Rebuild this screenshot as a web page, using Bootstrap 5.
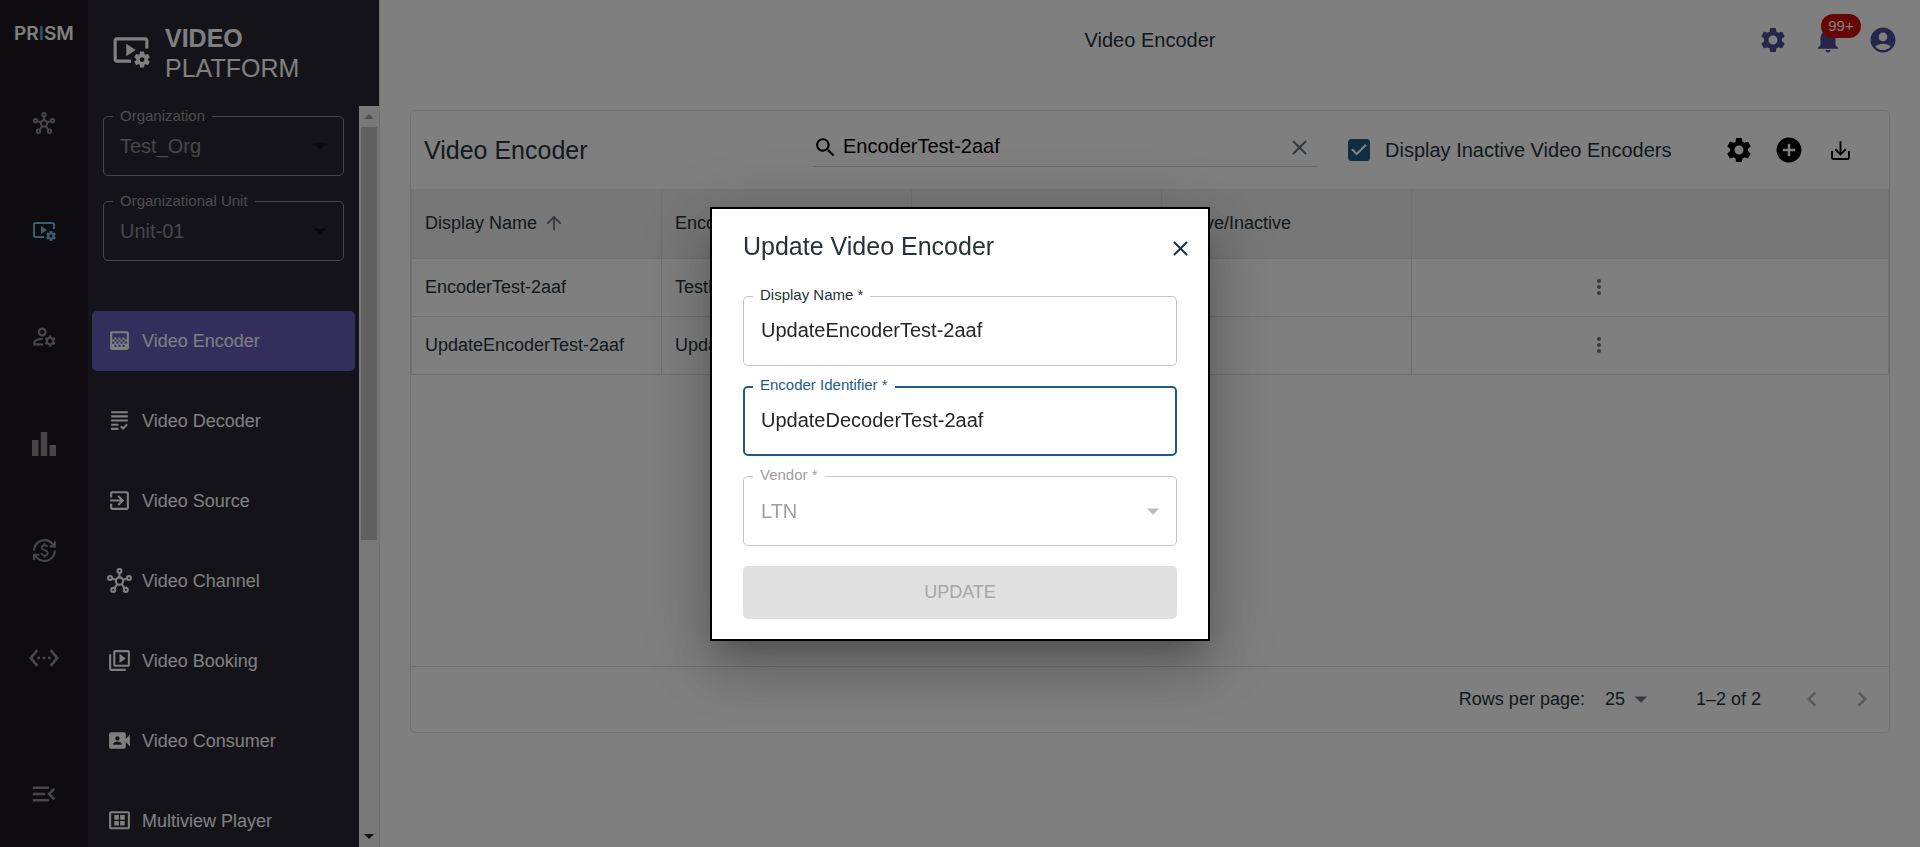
<!DOCTYPE html>
<html lang="en">
<head>
<meta charset="utf-8">
<meta name="viewport" content="width=device-width, initial-scale=1">
<title>Video Encoder</title>
<link href="https://cdn.jsdelivr.net/npm/bootstrap@5.3.0/dist/css/bootstrap.min.css" rel="stylesheet">
<style>
  :root { --ink:#263238; --line:#e0e0e0; --rail:#1e1922; --panel:#2a2735; --accent:#645eb8; --brand:#504a94; --blue:#1f5c82; }
  body { font-family:"Liberation Sans",Arial,sans-serif; font-size:18px; line-height:24px; color:var(--ink); background:#fff; }
  svg { fill:currentColor; flex:none; display:block; }
  .i22{width:22px;height:22px} .i24{width:24px;height:24px} .i25{width:25px;height:25px} .i27{width:27px;height:27px}
  .i30{width:30px;height:30px} .i32{width:32px;height:32px} .i38{width:38px;height:38px}
  .plain { background:none; border:0; padding:0; color:inherit; }

  .rail { width:88px; background:var(--rail); color:#8e8e8e; flex:none; }
  .rail-logo { height:69px; font:600 19px/24px Inter,sans-serif; color:#fff; padding-top:22px; }
  .rail-logo span { color:#5aa9cc; }
  .rail-link { height:107px; color:inherit; }
  .rail-link.current { color:#6fbfe3; }

  .side { width:292px; background:var(--panel); color:#fff; flex:none; border-right:1px solid var(--line); }
  .side-head { height:106px; padding:23px 24px 0; font-size:25px; line-height:30px; gap:15px; }
  .side-body { padding:10px 4px 0; }
  .side-fields { padding:0 11px; gap:25px; margin-bottom:50px; }
  .side-nav { gap:20px; }
  .side-nav a { height:60px; padding:0 15px; gap:10px; color:#fff; border-radius:5px; flex:none; }
  .side-nav a.current { background:var(--accent); }
  .bar-track { width:20px; background:#f1f1f1; color:#a3a3a3; flex:none; }
  .bar-track .cap { height:21px; flex:none; }
  .bar-track .thumb { height:413px; margin:0 2px; background:#c1c1c1; }

  .outlined { position:relative; }
  .outlined > label { position:absolute; left:10px; top:-10px; padding:0 7px; font-size:15px; line-height:18px; background:#fff; z-index:1; }
  .outlined .form-control, .outlined .form-select { height:70px; padding:0 17px; font-size:20px; line-height:24px; border:1px solid #c4c4c4; border-radius:5px; background-color:#fff; color:#262626; box-shadow:none; }
  .outlined .form-select { background-size:30px 30px; background-position:right 8px center; background-image:url("data:image/svg+xml,%3Csvg xmlns='http://www.w3.org/2000/svg' viewBox='0 0 24 24'%3E%3Cpath fill='%23bdbdbd' d='M7 10l5 5 5-5z'/%3E%3C/svg%3E"); }
  .outlined .form-select:disabled { color:#9e9e9e; opacity:1; }
  .outlined.active > label { color:var(--blue); }
  .outlined.active .form-control { border:2px solid var(--blue); padding:0 16px; }
  .outlined.muted > label { color:#9e9e9e; }
  .side .outlined > label { background:var(--panel); color:#9a9a9a; top:-9px; }
  .side .outlined .form-select { height:60px; padding:0 16px; background-color:transparent; border-color:#8e8e8e; color:#8e8e8e; background-image:url("data:image/svg+xml,%3Csvg xmlns='http://www.w3.org/2000/svg' viewBox='0 0 24 24'%3E%3Cpath fill='%23111' d='M7 10l5 5 5-5z'/%3E%3C/svg%3E"); }

  .topbar { height:80px; display:grid; grid-template-columns:1fr auto 1fr; align-items:center; padding:0 22px; }
  .topbar h1 { font-size:20px; line-height:24px; font-weight:400; margin:0; }
  .topbar .tools { color:var(--brand); gap:25px; }
  .count { position:absolute; left:8px; top:-11px; width:40px; height:24px; border-radius:12px; background:#cc0e0e; color:#fff; font-size:15px; line-height:24px; text-align:center; }

  .panel { margin:30px 30px 0; border:1px solid var(--line); border-radius:5px; height:623px; }
  .toolbar { height:78px; padding:0 32px 0 13px; }
  .toolbar h2 { font-size:25px; line-height:30px; font-weight:400; margin:0; width:389px; }
  .search { height:38px; border-bottom:1px solid #cfcfcf; width:505px; padding:0 6px 0 0; color:#000; margin-bottom:5px; }
  .search input { border:0; padding:0 0 2px 1px; font-size:20px; line-height:24px; color:#000; background:none; box-shadow:none; }
  .inactive { margin-left:30px; gap:15px; font-size:20px; }
  .inactive .form-check-input { width:22px; height:22px; margin:0; border-radius:3px; border-color:var(--blue); background-color:var(--blue); }
  .inactive .form-check-input:checked { background-image:url("data:image/svg+xml,%3Csvg xmlns='http://www.w3.org/2000/svg' viewBox='3 3 18 18'%3E%3Cpath fill='%23fff' d='M10 17l-5-5 1.410-1.410L10 14.170l7.590-7.590L19 8l-9 9z'/%3E%3C/svg%3E"); }
  .actions { gap:20px; color:#000; }
  .grid-table { table-layout:fixed; margin:0; --bs-table-color:var(--ink); }
  .grid-table th, .grid-table td { font-weight:400; padding:0 13px; border:1px solid var(--line); border-top:0; vertical-align:middle; height:58px; white-space:nowrap; color:var(--ink); }
  .grid-table th { height:69px; background:#efefef; }
  .grid-table .sorted { gap:6px; }
  .grid-table .c-main { width:250px; } .grid-table .c-act { width:375px; }
  .grid-table .open-end { border-right:0; } .grid-table .fill-end { border-left:0; }
  .pager { height:66px; border-top:1px solid var(--line); padding:0 12px 2px; }
  .pager select { border:0; background:none; appearance:none; padding:0; margin-left:20px; color:var(--ink); }
  .pager .span-of { margin:0 36px 0 40px; }
  .pager .step { color:#b4b4b4; }
  .pager .step + .step { margin-left:20px; }

  .modal-dialog { max-width:500px; }
  .modal-content { border:2px solid #000; border-radius:0; color:var(--ink); padding:20px 31px 20px; box-shadow:0 14px 24px -9px rgba(0,0,0,.2),0 30px 48px 4px rgba(0,0,0,.14),0 14px 72px 12px rgba(0,0,0,.14); }
  .modal-title { font-size:25px; line-height:34px; font-weight:400; }
  .modal-head { height:67px; margin-right:-16px; }
  .modal-head button { margin-top:7px; }
  .modal-content form { gap:20px; }
  .btn-save, .btn-save:disabled { height:53px; border:0; border-radius:5px; background:#e0e0e0; color:#a6a6a6; font-size:18px; opacity:1; }
</style>
<script src="https://cdn.jsdelivr.net/npm/bootstrap@5.3.0/dist/js/bootstrap.bundle.min.js"></script>
</head>
<body class="vh-100 d-flex overflow-hidden">

<svg class="d-none">
  <symbol id="hub" viewBox="0 0 24 24"><g fill="none" stroke="currentColor" stroke-width="2"><circle cx="12" cy="12.500" r="3.500"/><circle cx="12" cy="2.900" r="1.900"/><circle cx="2.900" cy="9.500" r="1.900"/><circle cx="21.100" cy="9.500" r="1.900"/><circle cx="6" cy="21" r="1.900"/><circle cx="18" cy="21" r="1.900"/><path d="M12 5v4M4.800 10.100l3.800 1.200M19.200 10.100l-3.800 1.200M7.200 19.300l2.600-3.700M16.800 19.300l-2.600-3.700"/></g></symbol>
  <symbol id="video-settings" viewBox="0 0 24 24"><path d="M3 6h18v5h2V6c0-1.100-.9-2-2-2H3c-1.100 0-2 .9-2 2v12c0 1.100.9 2 2 2h9v-2H3V6z"/><path d="M15 12 9 8v8z"/><path d="M22.710 18.430c.03-.29.04-.58.01-.86l1.070-.85c.1-.08.12-.21.06-.32l-1.030-1.790c-.06-.11-.19-.15-.31-.11l-1.280.5c-.23-.17-.48-.31-.75-.42l-.2-1.360c-.02-.13-.12-.22-.25-.22h-2.070c-.12 0-.23.09-.25.21l-.2 1.360c-.26.11-.51.26-.74.42l-1.280-.5c-.12-.05-.25 0-.31.11l-1.030 1.790c-.06.11-.04.24.06.32l1.070.86c-.03.29-.04.58-.01.86l-1.070.85c-.1.08-.12.21-.06.32l1.030 1.790c.06.11.19.15.31.11l1.270-.5c.23.17.48.31.75.42l.2 1.360c.02.12.12.21.25.21h2.070c.12 0 .23-.09.25-.21l.2-1.360c.26-.11.51-.26.74-.42l1.280.5c.12.05.25 0 .31-.11l1.030-1.790c.06-.11.04-.24-.06-.32l-1.070-.86zM19 19.500c-.83 0-1.500-.67-1.500-1.500s.67-1.500 1.500-1.500 1.500.67 1.500 1.500-.67 1.500-1.500 1.500z"/></symbol>
  <symbol id="gear" viewBox="0 0 24 24"><path d="M19.140 12.940c.04-.3.06-.61.06-.94 0-.32-.02-.64-.07-.94l2.030-1.580c.18-.14.23-.41.12-.61l-1.920-3.320c-.12-.22-.37-.29-.59-.22l-2.390.96c-.5-.38-1.030-.7-1.620-.94l-.36-2.540c-.04-.24-.24-.41-.48-.41h-3.840c-.24 0-.43.17-.47.41l-.36 2.540c-.59.24-1.130.57-1.620.94l-2.390-.96c-.22-.08-.47 0-.59.22L2.740 8.870c-.12.21-.08.47.12.61l2.030 1.580c-.05.3-.09.63-.09.94s.02.64.07.94l-2.030 1.580c-.18.14-.23.41-.12.61l1.920 3.320c.12.22.37.29.59.22l2.390-.96c.5.38 1.030.7 1.620.94l.36 2.540c.05.24.24.41.48.41h3.840c.24 0 .44-.17.47-.41l.36-2.540c.59-.24 1.130-.56 1.620-.94l2.390.96c.22.08.47 0 .59-.22l1.920-3.320c.12-.22.07-.47-.12-.61l-2.010-1.580zM12 15.600c-1.980 0-3.600-1.620-3.600-3.600s1.620-3.600 3.600-3.600 3.600 1.620 3.600 3.600-1.620 3.600-3.600 3.600z"/></symbol>
  <symbol id="close" viewBox="0 0 24 24"><path d="M19 6.410 17.590 5 12 10.590 6.410 5 5 6.410 10.590 12 5 17.590 6.410 19 12 13.410 17.590 19 19 17.590 13.410 12z"/></symbol>
  <symbol id="dots" viewBox="0 0 24 24"><path d="M12 8c1.100 0 2-.9 2-2s-.9-2-2-2-2 .9-2 2 .9 2 2 2zm0 2c-1.100 0-2 .9-2 2s.9 2 2 2 2-.9 2-2-.9-2-2-2zm0 6c-1.100 0-2 .9-2 2s.9 2 2 2 2-.9 2-2-.9-2-2-2z"/></symbol>
</svg>

<nav class="rail d-flex flex-column" aria-label="Products">
  <div class="rail-logo text-center">PR<span>I</span>SM</div>
  <a href="#" class="rail-link d-flex align-items-center justify-content-center" aria-label="Network"><svg class="i22"><use href="#hub"/></svg></a>
  <a href="#" class="rail-link current d-flex align-items-center justify-content-center" aria-label="Video platform"><svg class="i24"><use href="#video-settings"/></svg></a>
  <a href="#" class="rail-link d-flex align-items-center justify-content-center" aria-label="Accounts"><svg class="i27" viewBox="0 0 24 24"><path d="M4 18v-.65c0-.34.16-.66.41-.81C6.100 15.530 8.030 15 10 15c.03 0 .05 0 .08.01.1-.7.3-1.370.59-1.980-.22-.02-.44-.03-.67-.03-2.420 0-4.680.67-6.610 1.820-.88.52-1.390 1.500-1.390 2.530V20h9.260c-.42-.6-.75-1.280-.97-2H4zM10 12c2.210 0 4-1.790 4-4s-1.790-4-4-4C7.790 4 6 5.790 6 8s1.790 4 4 4zm0-6c1.100 0 2 .9 2 2s-.9 2-2 2-2-.9-2-2 .9-2 2-2zM20.750 16c0-.22-.03-.42-.06-.63l1.140-1.010-1-1.730-1.450.49c-.32-.27-.68-.48-1.080-.63L18 11h-2l-.3 1.490c-.4.15-.76.36-1.080.63l-1.450-.49-1 1.730 1.140 1.010c-.03.21-.06.41-.06.63s.03.42.06.63l-1.140 1.010 1 1.730 1.450-.49c.32.27.68.48 1.080.63L16 21h2l.3-1.490c.4-.15.76-.36 1.080-.63l1.450.49 1-1.730-1.140-1.010c.03-.21.06-.41.06-.63zM17 18c-1.100 0-2-.9-2-2s.9-2 2-2 2 .9 2 2-.9 2-2 2z"/></svg></a>
  <a href="#" class="rail-link d-flex align-items-center justify-content-center" aria-label="Reports"><svg class="i24" viewBox="0 0 24 24"><path d="M0 8h6.500v16H0zM8.800 0h6.400v24H8.800zM17.500 13H24v11h-6.500z"/></svg></a>
  <a href="#" class="rail-link d-flex align-items-center justify-content-center" aria-label="Billing"><svg class="i25" viewBox="0 0 24 24"><path d="M12.890 11.100c-1.780-.59-2.640-.96-2.640-1.900 0-1.020 1.110-1.390 1.810-1.390 1.310 0 1.790.99 1.900 1.340l1.580-.67c-.15-.44-.82-1.910-2.660-2.230V5h-1.750v1.260c-2.600.56-2.620 2.850-2.620 2.960 0 2.270 2.250 2.910 3.350 3.310 1.580.56 2.280 1.070 2.280 2.030 0 1.130-1.050 1.610-1.980 1.610-1.820 0-2.340-1.870-2.400-2.090l-1.660.67c.63 2.190 2.280 2.780 3.020 2.960V19h1.750v-1.240c.52-.09 3.020-.59 3.020-3.220.01-1.390-.6-2.610-3-3.440zM3 21H1v-6h6v2H4.520c1.610 2.410 4.360 4 7.480 4 4.970 0 9-4.030 9-9h2c0 6.080-4.920 11-11 11-3.720 0-7.010-1.850-9-4.670V21zm-2-9C1 5.920 5.920 1 12 1c3.720 0 7.010 1.850 9 4.670V3h2v6h-6V7h2.480C17.870 4.590 15.120 3 12 3c-4.970 0-9 4.030-9 9H1z"/></svg></a>
  <a href="#" class="rail-link d-flex align-items-center justify-content-center" aria-label="Integrations"><svg class="i32" viewBox="0 0 24 24"><path d="M7.770 6.760 6.230 5.480.82 12l5.410 6.520 1.540-1.280L3.420 12l4.350-5.240zM7 13h2v-2H7v2zm10-2h-2v2h2v-2zm-6 2h2v-2h-2v2zm6.770-7.520-1.540 1.280L20.580 12l-4.350 5.240 1.540 1.280L23.180 12l-5.410-6.520z"/></svg></a>
  <button type="button" class="plain rail-link mt-auto d-flex align-items-center justify-content-center" aria-label="Collapse menu"><svg class="i30" viewBox="0 0 24 24"><path d="M3 18h13v-2H3v2zm0-5h10v-2H3v2zm0-7v2h13V6H3zm18 9.590L17.420 12 21 8.410 19.590 7l-5 5 5 5L21 15.590z"/></svg></button>
</nav>

<aside class="side d-flex flex-column">
  <header class="side-head d-flex align-items-start">
    <svg class="i38 mt-2"><use href="#video-settings"/></svg>
    <div><b>VIDEO</b><br>PLATFORM</div>
  </header>
  <div class="d-flex flex-grow-1 overflow-hidden">
    <div class="side-body flex-grow-1 overflow-hidden">
      <div class="side-fields d-flex flex-column">
        <div class="outlined"><label for="org">Organization</label><select id="org" class="form-select"><option>Test_Org</option></select></div>
        <div class="outlined"><label for="unit">Organizational Unit</label><select id="unit" class="form-select"><option>Unit-01</option></select></div>
      </div>
      <nav class="side-nav d-flex flex-column" aria-label="Video platform">
        <a href="#" class="current d-flex align-items-center text-decoration-none"><svg class="i25" viewBox="0 0 24 24"><path d="M11 9h2v2h-2zm-2 2h2v2H9zm4 0h2v2h-2zm2-2h2v2h-2zM7 9h2v2H7zm12-6H5c-1.100 0-2 .9-2 2v14c0 1.100.9 2 2 2h14c1.100 0 2-.9 2-2V5c0-1.100-.9-2-2-2zM9 18H7v-2h2v2zm4 0h-2v-2h2v2zm4 0h-2v-2h2v2zm2-7h-2v2h2v2h-2v-2h-2v2h-2v-2h-2v2H9v-2H7v2H5v-2h2v-2H5V5h14v6z"/></svg>Video Encoder</a>
        <a href="#" class="d-flex align-items-center text-decoration-none"><svg class="i25" viewBox="0 0 24 24"><path d="M4 7h16v2H4V7zm0 6h16v-2H4v2zm0 4h7v-2H4v2zm0 4h7v-2H4v2zm11.410-2.830L14 16.750l-1.410 1.410L15.410 21 20 16.420 18.580 15l-3.170 3.170zM4 3v2h16V3H4z"/></svg>Video Decoder</a>
        <a href="#" class="d-flex align-items-center text-decoration-none"><svg class="i25" viewBox="0 0 24 24"><path d="M10.090 15.590 11.500 17l5-5-5-5-1.410 1.410L12.670 11H3v2h9.670l-2.580 2.590zM19 3H5c-1.110 0-2 .9-2 2v4h2V5h14v14H5v-4H3v4c0 1.100.89 2 2 2h14c1.100 0 2-.9 2-2V5c0-1.100-.9-2-2-2z"/></svg>Video Source</a>
        <a href="#" class="d-flex align-items-center text-decoration-none"><svg class="i25"><use href="#hub"/></svg>Video Channel</a>
        <a href="#" class="d-flex align-items-center text-decoration-none"><svg class="i25" viewBox="0 0 24 24"><path d="M4 6H2v14c0 1.100.9 2 2 2h14v-2H4V6zm16-4H8c-1.100 0-2 .9-2 2v12c0 1.100.9 2 2 2h12c1.100 0 2-.9 2-2V4c0-1.100-.9-2-2-2zm0 14H8V4h12v12zM12 5.500v9l6-4.500z"/></svg>Video Booking</a>
        <a href="#" class="d-flex align-items-center text-decoration-none"><svg class="i25" viewBox="0 0 24 24"><path d="M18 10.480V6c0-1.100-.9-2-2-2H4c-1.100 0-2 .9-2 2v12c0 1.100.9 2 2 2h12c1.100 0 2-.9 2-2v-4.480l4 3.980v-11l-4 3.980zM10 8c1.100 0 2 .9 2 2s-.9 2-2 2-2-.9-2-2 .9-2 2-2zm4 8H6v-.57c0-.81.48-1.530 1.220-1.850.85-.37 1.790-.58 2.780-.58.99 0 1.930.21 2.780.58.74.32 1.220 1.040 1.220 1.850V16z"/></svg>Video Consumer</a>
        <a href="#" class="d-flex align-items-center text-decoration-none"><svg class="i25" viewBox="0 0 24 24"><path fill-rule="evenodd" d="M4 3h16c1.100 0 2 .9 2 2v13.500c0 1.100-.9 2-2 2H4c-1.100 0-2-.9-2-2V5c0-1.100.9-2 2-2zm0 2v13.500h16V5z"/><path d="M7 6.800h4.400v4.400H7zM12.600 6.800H17v4.400h-4.400zM7 12.400h4.400v4.400H7zM12.600 12.400H17v4.400h-4.400z"/></svg>Multiview Player</a>
      </nav>
    </div>
    <div class="bar-track d-flex flex-column" aria-hidden="true">
      <div class="cap d-flex align-items-center justify-content-center"><svg width="10" height="5" viewBox="0 0 10 5"><path d="M0 5l5-5 5 5z"/></svg></div>
      <div class="thumb"></div>
      <div class="cap mt-auto d-flex align-items-center justify-content-center text-dark"><svg width="10" height="5" viewBox="0 0 10 5"><path d="M0 0h10L5 5z"/></svg></div>
    </div>
  </div>
</aside>

<main class="flex-grow-1" style="min-width:0">
  <header class="topbar">
    <span></span>
    <h1>Video Encoder</h1>
    <div class="tools d-flex justify-content-end">
      <button type="button" class="plain" aria-label="Settings"><svg class="i30"><use href="#gear"/></svg></button>
      <button type="button" class="plain position-relative" aria-label="Notifications"><svg class="i30" viewBox="0 0 24 24"><path d="M12 22c1.100 0 2-.9 2-2h-4c0 1.100.89 2 2 2zm6-6v-5c0-3.070-1.640-5.640-4.500-6.320V4c0-.83-.67-1.500-1.500-1.500s-1.500.67-1.500 1.500v.68C7.630 5.360 6 7.920 6 11v5l-2 2v1h16v-1l-2-2z"/></svg><span class="count">99+</span></button>
      <button type="button" class="plain" aria-label="Account"><svg class="i30" viewBox="0 0 24 24"><path d="M12 2C6.480 2 2 6.480 2 12s4.480 10 10 10 10-4.480 10-10S17.520 2 12 2zm0 4c1.930 0 3.500 1.570 3.500 3.500S13.930 13 12 13s-3.500-1.570-3.500-3.500S10.070 6 12 6zm0 14c-2.030 0-4.430-.82-6.140-2.880C7.550 15.800 9.680 15 12 15s4.450.8 6.140 2.120C16.430 19.180 14.030 20 12 20z"/></svg></button>
    </div>
  </header>

  <section class="panel d-flex flex-column">
    <div class="toolbar d-flex align-items-center">
      <h2>Video Encoder</h2>
      <div class="search d-flex align-items-center">
        <svg class="i25" viewBox="0 0 24 24"><path d="M15.500 14h-.79l-.28-.27C15.410 12.590 16 11.110 16 9.500 16 5.910 13.090 3 9.500 3S3 5.910 3 9.500 5.910 16 9.500 16c1.610 0 3.090-.59 4.230-1.570l.27.28v.79l5 4.990L20.490 19l-4.990-5zm-6 0C7.010 14 5 11.990 5 9.500S7.010 5 9.500 5 14 7.010 14 9.500 11.990 14 9.500 14z"/></svg>
        <input type="text" class="form-control ms-1" value="EncoderTest-2aaf" aria-label="Search">
        <button type="button" class="plain text-secondary" aria-label="Clear"><svg class="i25"><use href="#close"/></svg></button>
      </div>
      <label class="inactive d-flex align-items-center text-nowrap"><input type="checkbox" class="form-check-input" checked>Display Inactive Video Encoders</label>
      <div class="actions d-flex ms-auto">
        <button type="button" class="plain" aria-label="Columns"><svg class="i30"><use href="#gear"/></svg></button>
        <button type="button" class="plain" aria-label="Add"><svg class="i30" viewBox="0 0 24 24"><path d="M12 2C6.480 2 2 6.480 2 12s4.480 10 10 10 10-4.480 10-10S17.520 2 12 2zm5 11h-4v4h-2v-4H7v-2h4V7h2v4h4v2z"/></svg></button>
        <button type="button" class="plain px-1" aria-label="Download"><svg class="i25" viewBox="0 0 24 24"><path fill="none" stroke="currentColor" stroke-width="1.800" d="M12 3v12.500M7 10.800l5 4.900 5-4.900M3.900 12.500v6.600q0 1 1 1h14.200q1 0 1-1v-6.600"/></svg></button>
      </div>
    </div>
    <table class="table grid-table">
      <colgroup><col class="c-main"><col class="c-main"><col class="c-main"><col class="c-main"><col class="c-act"><col></colgroup>
      <thead><tr>
        <th scope="col"><span class="sorted d-flex align-items-center">Display Name<svg class="i22 text-secondary" viewBox="0 0 24 24"><path d="M4 12l1.410 1.410L11 7.830V20h2V7.830l5.580 5.590L20 12l-8-8-8 8z"/></svg></span></th>
        <th scope="col">Encoder Identifier</th><th scope="col">Vendor</th><th scope="col">Active/Inactive</th><th class="open-end"></th><th class="fill-end"></th>
      </tr></thead>
      <tbody>
        <tr><td>EncoderTest-2aaf</td><td>TestEnc</td><td></td><td></td><td class="open-end"><button type="button" class="plain d-block mx-auto text-secondary" aria-label="Row menu"><svg class="i24"><use href="#dots"/></svg></button></td><td class="fill-end"></td></tr>
        <tr><td>UpdateEncoderTest-2aaf</td><td>UpdateE</td><td></td><td></td><td class="open-end"><button type="button" class="plain d-block mx-auto text-secondary" aria-label="Row menu"><svg class="i24"><use href="#dots"/></svg></button></td><td class="fill-end"></td></tr>
      </tbody>
    </table>
    <div class="pager mt-auto d-flex align-items-center justify-content-end">
      <label for="rows">Rows per page:</label>
      <select id="rows"><option>25</option></select>
      <svg class="i30 text-secondary" viewBox="0 0 24 24"><path d="M7 10l5 5 5-5z"/></svg>
      <span class="span-of">1–2 of 2</span>
      <button type="button" class="plain step" aria-label="Previous page" disabled><svg class="i30" viewBox="0 0 24 24"><path d="M15.410 7.410 14 6l-6 6 6 6 1.410-1.410L10.830 12z"/></svg></button>
      <button type="button" class="plain step" aria-label="Next page" disabled><svg class="i30" viewBox="0 0 24 24"><path d="M10 6 8.590 7.410 13.170 12l-4.580 4.590L10 18l6-6z"/></svg></button>
    </div>
  </section>
</main>

<div class="modal-backdrop show"></div>
<div class="modal show d-block" role="dialog" aria-modal="true" aria-labelledby="dlg-title">
  <div class="modal-dialog modal-dialog-centered">
    <div class="modal-content">
      <div class="modal-head d-flex justify-content-between align-items-start">
        <h2 class="modal-title" id="dlg-title">Update Video Encoder</h2>
        <button type="button" class="plain" aria-label="Close"><svg class="i25"><use href="#close"/></svg></button>
      </div>
      <form class="d-flex flex-column">
        <div class="outlined"><label for="f-name">Display Name *</label><input id="f-name" type="text" class="form-control" value="UpdateEncoderTest-2aaf"></div>
        <div class="outlined active"><label for="f-id">Encoder Identifier *</label><input id="f-id" type="text" class="form-control" value="UpdateDecoderTest-2aaf"></div>
        <div class="outlined muted"><label for="f-vendor">Vendor *</label><select id="f-vendor" class="form-select" disabled><option>LTN</option></select></div>
        <button type="submit" class="btn btn-save" disabled>UPDATE</button>
      </form>
    </div>
  </div>
</div>
</body>
</html>
